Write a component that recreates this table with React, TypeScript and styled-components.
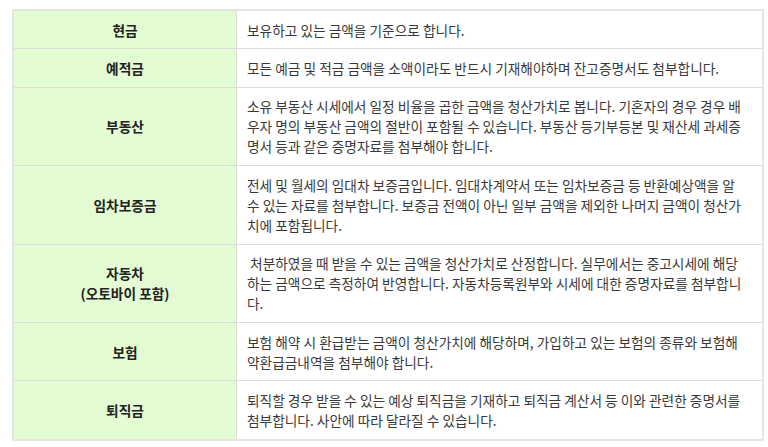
import React from 'react';
import styled, { createGlobalStyle } from 'styled-components';

const GlobalStyle = createGlobalStyle`
  html, body {
    margin: 0;
    padding: 0;
    background: #ffffff;
  }
  body {
    font-family: "Noto Sans CJK KR", "Noto Sans", sans-serif;
  }
`;

const Page = styled.div`
  padding: 9px 4px 0 12px;
`;

const Table = styled.table`
  width: 752px;
  border-collapse: collapse;
  border: 2px solid #e4e4e4;
  table-layout: fixed;
  font-size: 13.7px;
  line-height: 20px;
`;

const HeadCell = styled.th`
  width: 202px;
  background: #e4fcd3;
  border: 1px solid #dcdcdc;
  padding: 8.7px 10px;
  text-align: center;
  vertical-align: middle;
  font-weight: 700;
  color: #222;
`;

const BodyCell = styled.td`
  background: #ffffff;
  border: 1px solid #dcdcdc;
  padding: 8.7px 12px 8.7px 10px;
  text-align: left;
  vertical-align: middle;
  color: #3a3a3a;
  word-break: break-all;
`;

interface Row {
  title: React.ReactNode;
  text: string;
}

const rows: Row[] = [
  { title: '현금', text: '보유하고 있는 금액을 기준으로 합니다.' },
  { title: '예적금', text: '모든 예금 및 적금 금액을 소액이라도 반드시 기재해야하며 잔고증명서도 첨부합니다.' },
  {
    title: '부동산',
    text: '소유 부동산 시세에서 일정 비율을 곱한 금액을 청산가치로 봅니다. 기혼자의 경우 경우 배우자 명의 부동산 금액의 절반이 포함될 수 있습니다. 부동산 등기부등본 및 재산세 과세증명서 등과 같은 증명자료를 첨부해야 합니다.',
  },
  {
    title: '임차보증금',
    text: '전세 및 월세의 임대차 보증금입니다. 임대차계약서 또는 임차보증금 등 반환예상액을 알 수 있는 자료를 첨부합니다. 보증금 전액이 아닌 일부 금액을 제외한 나머지 금액이 청산가치에 포함됩니다.',
  },
  {
    title: (
      <>
        자동차
        <br />
        (오토바이 포함)
      </>
    ),
    text: '\u00a0처분하였을 때 받을 수 있는 금액을 청산가치로 산정합니다. 실무에서는 중고시세에 해당하는 금액으로 측정하여 반영합니다. 자동차등록원부와 시세에 대한 증명자료를 첨부합니다.',
  },
  {
    title: '보험',
    text: '보험 해약 시 환급받는 금액이 청산가치에 해당하며, 가입하고 있는 보험의 종류와 보험해약환급금내역을 첨부해야 합니다.',
  },
  {
    title: '퇴직금',
    text: '퇴직할 경우 받을 수 있는 예상 퇴직금을 기재하고 퇴직금 계산서 등 이와 관련한 증명서를 첨부합니다. 사안에 따라 달라질 수 있습니다.',
  },
];

export default function App() {
  return (
    <>
      <GlobalStyle />
      <Page>
        <Table>
          <tbody>
            {rows.map((row, i) => (
              <tr key={i}>
                <HeadCell>{row.title}</HeadCell>
                <BodyCell>{row.text}</BodyCell>
              </tr>
            ))}
          </tbody>
        </Table>
      </Page>
    </>
  );
}
